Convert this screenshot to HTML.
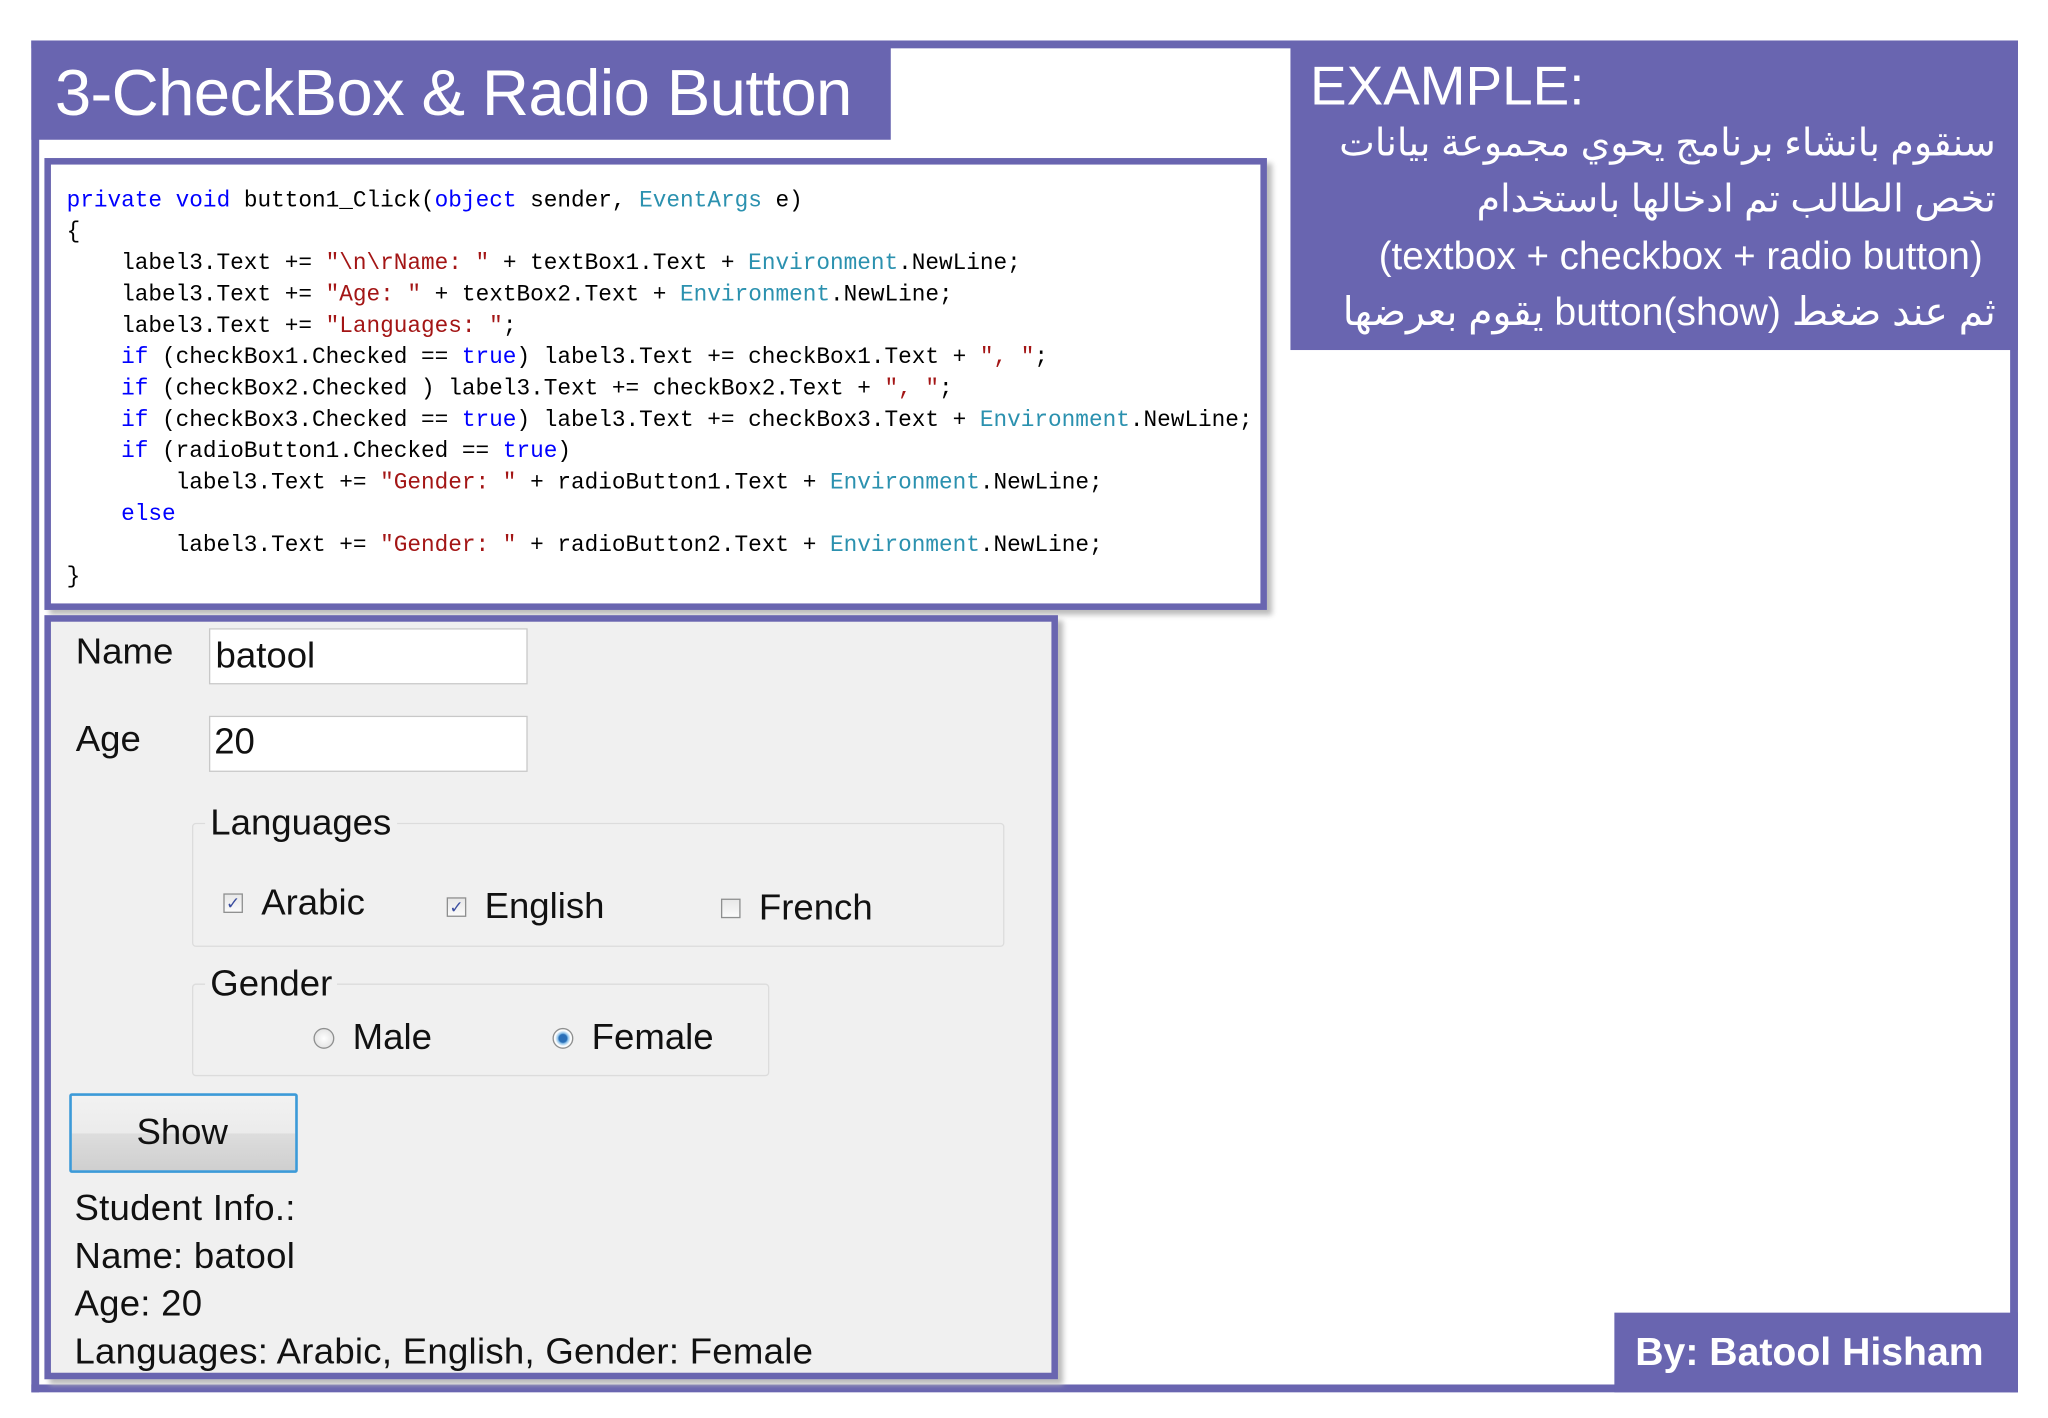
<!DOCTYPE html>
<html><head><meta charset="utf-8">
<style>
html,body{margin:0;padding:0;background:#fff;width:2048px;height:1418px;overflow:hidden}
#s{position:absolute;left:0;top:0;width:1568px;height:1086px;transform:scale(1.30612);transform-origin:0 0;font-family:"Liberation Sans",sans-serif}
.a{position:absolute}
.p{background:#6965b0}
.code{font-family:"Liberation Mono",monospace;font-size:17.4px;line-height:24px;color:#000;white-space:pre}
.k{color:#0000ff}.t{color:#2b91af}.st{color:#a31515}
.f{font-size:28px;color:#111;position:absolute;white-space:nowrap}
.tb{position:absolute;background:#fff;border:1px solid #c8c8c8}
.cb{position:absolute;width:15px;height:15px;border:1px solid #8e8f8f;background:linear-gradient(#e8e8e8,#fafafa);box-sizing:border-box;font-size:13px;line-height:13px;text-align:center;color:#3b4ea0}
.rb{position:absolute;width:16px;height:16px;border-radius:50%;border:1px solid #8e8f8f;background:radial-gradient(#fff,#dcdcdc);box-sizing:border-box}
.gb{position:absolute;border:1px solid #dcdcdc;border-radius:3px}
</style></head><body>
<div id="s">
<div class="a p" style="left:24px;top:31px;width:1521px;height:6px"></div>
<div class="a p" style="left:24px;top:31px;width:6px;height:1035px"></div>
<div class="a p" style="left:1539px;top:31px;width:6px;height:1035px"></div>
<div class="a p" style="left:24px;top:1060px;width:1521px;height:6px"></div>
<div class="a p" style="left:24px;top:31px;width:658px;height:76px"></div>
<div class="a" style="left:42px;top:38px;color:#fff;font-family:'Comic Sans MS','Liberation Sans',sans-serif;font-size:50px;line-height:66px;white-space:nowrap;letter-spacing:-0.5px">3-CheckBox &amp; Radio Button</div>
<div class="a p" style="left:988px;top:31px;width:557px;height:237px"></div>
<div class="a" style="left:1003px;top:40px;color:#fff;font-family:'Comic Sans MS','Liberation Sans',sans-serif;font-size:42px;line-height:52px">EXAMPLE:</div>
<div class="a" style="right:40px;top:89px;width:540px;color:#fff;font-family:'Liberation Sans','DejaVu Sans',sans-serif;font-size:29px;line-height:43px;text-align:right;direction:rtl;white-space:nowrap">
<div>سنقوم بانشاء برنامج يحوي  مجموعة بيانات</div>
<div>تخص الطالب تم ادخالها باستخدام</div>
<div style="direction:ltr;padding-right:10px;font-size:29.5px">(textbox + checkbox + radio button)</div>
<div style="font-size:30px">ثم عند ضغط button(show) يقوم بعرضها</div>
</div>
<div class="a p" style="left:1236px;top:1005px;width:309px;height:61px"></div>
<div class="a" style="left:1252px;top:1016px;color:#fff;font-weight:bold;font-size:30px;line-height:40px;white-space:nowrap">By: Batool Hisham</div>
<div class="a" style="left:34px;top:121px;width:926px;height:336px;border:5px solid #6965b0;background:#fff;box-shadow:4px 4px 4px #bbb"></div>
<div class="a code" style="left:51px;top:143px"><span class="k">private</span> <span class="k">void</span> button1_Click(<span class="k">object</span> sender, <span class="t">EventArgs</span> e)
{
    label3.Text += <span class="st">"\n\rName: "</span> + textBox1.Text + <span class="t">Environment</span>.NewLine;
    label3.Text += <span class="st">"Age: "</span> + textBox2.Text + <span class="t">Environment</span>.NewLine;
    label3.Text += <span class="st">"Languages: "</span>;
    <span class="k">if</span> (checkBox1.Checked == <span class="k">true</span>) label3.Text += checkBox1.Text + <span class="st">", "</span>;
    <span class="k">if</span> (checkBox2.Checked ) label3.Text += checkBox2.Text + <span class="st">", "</span>;
    <span class="k">if</span> (checkBox3.Checked == <span class="k">true</span>) label3.Text += checkBox3.Text + <span class="t">Environment</span>.NewLine;
    <span class="k">if</span> (radioButton1.Checked == <span class="k">true</span>)
        label3.Text += <span class="st">"Gender: "</span> + radioButton1.Text + <span class="t">Environment</span>.NewLine;
    <span class="k">else</span>
        label3.Text += <span class="st">"Gender: "</span> + radioButton2.Text + <span class="t">Environment</span>.NewLine;
}</div>
<div class="a" style="left:34px;top:471px;width:766px;height:575px;border:5px solid #6965b0;background:#f0f0f0;box-shadow:4px 4px 4px #bbb"></div>
<div class="f" style="left:58px;top:483px">Name</div>
<div class="tb" style="left:160px;top:481px;width:242px;height:41px"></div>
<div class="f" style="left:165px;top:486px">batool</div>
<div class="f" style="left:58px;top:550px">Age</div>
<div class="tb" style="left:160px;top:548px;width:242px;height:41px"></div>
<div class="f" style="left:164px;top:552px">20</div>
<div class="gb" style="left:147px;top:630px;width:620px;height:93px"></div>
<div class="f" style="left:157px;top:614px;background:#f0f0f0;padding:0 4px">Languages</div>
<div class="cb" style="left:171px;top:684px">✓</div>
<div class="f" style="left:200px;top:675px">Arabic</div>
<div class="cb" style="left:342px;top:687px">✓</div>
<div class="f" style="left:371px;top:678px">English</div>
<div class="cb" style="left:552px;top:688px"></div>
<div class="f" style="left:581px;top:679px">French</div>
<div class="gb" style="left:147px;top:753px;width:440px;height:69px"></div>
<div class="f" style="left:157px;top:737px;background:#f0f0f0;padding:0 4px">Gender</div>
<div class="rb" style="left:240px;top:787px"></div>
<div class="f" style="left:270px;top:778px">Male</div>
<div class="rb" style="left:423px;top:787px;background:radial-gradient(#2a6fb8 0 3px,#8fc3ea 4px,#fff 6px,#dcdcdc)"></div>
<div class="f" style="left:453px;top:778px">Female</div>
<div class="a" style="left:53px;top:837px;width:175px;height:61px;border:2px solid #3c9ad8;border-radius:2px;background:linear-gradient(#f2f2f2 0,#ebebeb 50%,#dddddd 51%,#cfcfcf 100%);box-sizing:border-box"></div>
<div class="f" style="left:53px;top:851px;width:173px;text-align:center">Show</div>
<div class="f" style="left:57px;top:907px;line-height:36.5px;letter-spacing:0.2px">Student Info.:<br>Name: batool<br>Age: 20<br>Languages: Arabic, English, Gender: Female</div>
</div>
</body></html>
